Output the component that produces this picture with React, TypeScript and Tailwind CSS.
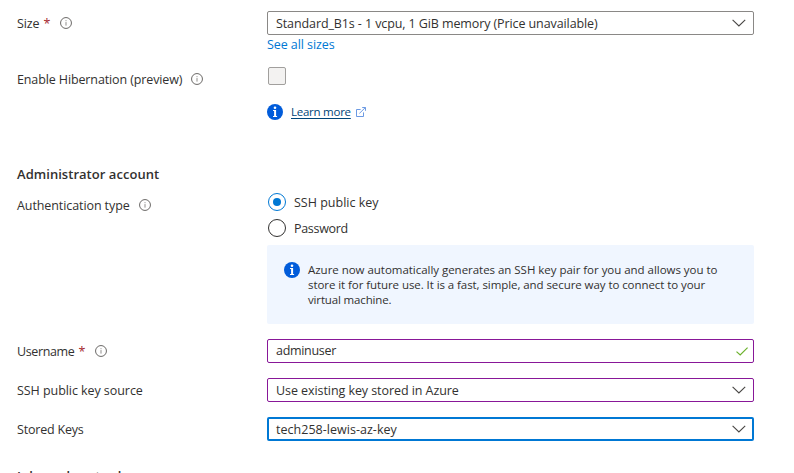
import type { ReactNode } from "react";

function InfoOutline() {
  return (
    <svg width="12" height="12" viewBox="0 0 12 12" fill="none" className="shrink-0">
      <circle cx="6" cy="6" r="5.45" stroke="#6b6967" strokeWidth="1" />
      <path d="M6 5.1V8.6M6 3.2V4.2" stroke="#8f8d8b" strokeWidth="1" />
    </svg>
  );
}

function InfoSolid() {
  return (
    <svg width="16" height="16" viewBox="0 0 16 16" className="shrink-0">
      <circle cx="8" cy="8" r="8" fill="#015cda" />
      <circle cx="8" cy="3.8" r="1.3" fill="#fff" />
      <path d="M6 6H9.1V12H10.1V13.1H6V12H7.1V7.1H6Z" fill="#fff" />
    </svg>
  );
}

function Chevron() {
  return (
    <svg width="14" height="8" viewBox="0 0 14 8" fill="none" className="shrink-0">
      <path d="M0.6 0.8L6.9 7L13.2 0.8" stroke="#484644" strokeWidth="1.1" />
    </svg>
  );
}

function Check() {
  return (
    <svg width="12" height="9" viewBox="0 0 12 9" fill="none" className="shrink-0">
      <path d="M0.5 4.6L4.2 8L11.6 0.6" stroke="#6bb12b" strokeWidth="1.2" />
    </svg>
  );
}

function ExternalLink() {
  return (
    <svg width="10" height="10" viewBox="0 0 10 10" fill="none" stroke="#5b8fe0" strokeWidth="0.9" className="shrink-0">
      <path d="M4.6 2.5H0.5V9.5H7.5V5.4M3.4 6.4L9.3 0.6M6.2 0.5H9.5V3.8" />
    </svg>
  );
}

function Label({ text, spacing, required, info }: { text: string; spacing: string; required?: boolean; info?: string }) {
  return (
    <div className="flex h-6 w-[250px] shrink-0 items-center">
      <span className={`mt-0.5 ${spacing}`}>{text}</span>
      {required && <span className="ml-1 mt-0.5 text-[#a4262c]">*</span>}
      {info && (
        <span className={info}>
          <InfoOutline />
        </span>
      )}
    </div>
  );
}

function Field({ border, children, icon }: { border: string; children: ReactNode; icon: ReactNode }) {
  return (
    <div className={`flex h-6 w-[487px] items-center justify-between rounded-[2px] ${border}`}>
      {children}
      {icon}
    </div>
  );
}

export default function App() {
  return (
    <main className="h-[473px] w-[794px] overflow-hidden bg-white pl-[17px] pt-[11px] font-['Open_Sans','Noto_Sans',sans-serif] text-[12.5px] leading-4 whitespace-nowrap text-[#323130]">
      <div className="flex h-6">
        <Label text="Size" spacing="tracking-[-0.1px]" required info="ml-[10px]" />
        <Field border="border border-[#8a8886] pl-2 pr-[7px]" icon={<Chevron />}>
          <span className="mt-0.5 tracking-[-0.1px]">Standard_B1s - 1 vcpu, 1 GiB memory (Price unavailable)</span>
        </Field>
      </div>
      <div className="ml-[250px] mt-[2px] h-4 text-[#0078d4]">
        <span className="tracking-[-0.08px]">See all sizes</span>
      </div>

      <div className="mt-[14px] flex h-6">
        <Label text="Enable Hibernation (preview)" spacing="tracking-[-0.12px]" info="ml-[9px]" />
        <div className="ml-px h-[18px] w-[18px] rounded-[2px] border border-[#a19f9d] bg-[#f3f2f1]" />
      </div>
      <div className="ml-[250px] mt-[13px] flex h-4 items-center">
        <InfoSolid />
        <span className="ml-2 text-[11.5px] tracking-[-0.25px] text-[#004578] underline underline-offset-2">Learn more</span>
        <span className="ml-[5px]">
          <ExternalLink />
        </span>
      </div>

      <h2 className="mt-[46px] h-4 text-[13px] font-semibold tracking-[0.04px]">Administrator account</h2>

      <div className="mt-[11px] flex h-[52px]">
        <Label text="Authentication type" spacing="tracking-[-0.09px]" info="ml-[9px]" />
        <div className="ml-px flex flex-col gap-2">
          <div className="flex h-[18px] items-center">
            <span className="flex size-[18px] items-center justify-center rounded-full border border-[#0078d4]">
              <span className="size-2 rounded-full bg-[#0078d4]" />
            </span>
            <span className="ml-2 mt-0.5">SSH public key</span>
          </div>
          <div className="flex h-[18px] items-center">
            <span className="size-[18px] rounded-full border border-[#323130]" />
            <span className="ml-2 mt-0.5 tracking-[-0.3px]">Password</span>
          </div>
        </div>
      </div>

      <div className="ml-[250px] flex h-[79px] w-[487px] rounded-[2px] bg-[#f0f6ff] pl-[17px] pt-[17px]">
        <InfoSolid />
        <p className="ml-2 text-[11.5px] leading-[15px]">
          <span className="block tracking-[-0.03px]">Azure now automatically generates an SSH key pair for you and allows you to</span>
          <span className="block tracking-[-0.07px]">store it for future use. It is a fast, simple, and secure way to connect to your</span>
          <span className="block tracking-[-0.15px]">virtual machine.</span>
        </p>
      </div>

      <div className="mt-[15px] flex h-6">
        <Label text="Username" spacing="tracking-[-0.38px]" required info="ml-[10px]" />
        <Field border="border border-[#881798] pl-2 pr-[5px]" icon={<Check />}>
          <span className="tracking-[-0.3px]">adminuser</span>
        </Field>
      </div>
      <div className="mt-[15px] flex h-6">
        <Label text="SSH public key source" spacing="tracking-[-0.06px]" />
        <Field border="border border-[#881798] pl-2 pr-[7px]" icon={<Chevron />}>
          <span className="mt-0.5 tracking-[-0.07px]">Use existing key stored in Azure</span>
        </Field>
      </div>
      <div className="mt-[15px] flex h-6">
        <Label text="Stored Keys" spacing="tracking-[-0.2px]" />
        <Field border="border-2 border-[#0078d4] pl-[7px] pr-[6px]" icon={<Chevron />}>
          <span className="mt-0.5 tracking-[0.03px]">tech258-lewis-az-key</span>
        </Field>
      </div>
      <h2 className="mt-[27px] h-4 text-[13px] font-semibold tracking-[0.04px]">Inbound port rules</h2>
    </main>
  );
}
